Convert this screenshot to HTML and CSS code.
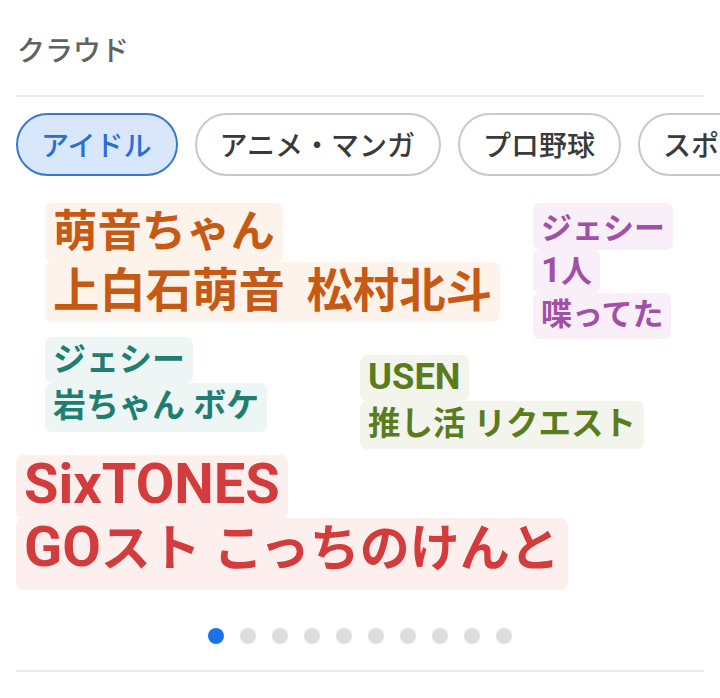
FILE: index.html
```html
<!DOCTYPE html>
<html lang="ja">
<head>
<meta charset="utf-8">
<title>クラウド</title>
<link rel="stylesheet" href="styles.css">
</head>
<body>
<main class="page">
  <header class="head">
    <h2 class="title">クラウド</h2>
  </header>
  <nav class="chips">
    <span class="chip active">アイドル</span>
    <span class="chip">アニメ・マンガ</span>
    <span class="chip">プロ野球</span>
    <span class="chip">スポーツ</span>
  </nav>
  <section class="cloud">
    <div class="word orange"><span class="ln">萌音ちゃん</span><span class="ln">上白石萌音 松村北斗</span></div>
    <div class="word purple"><span class="ln">ジェシー</span><span class="ln"><i class="lat">1</i>人</span><span class="ln">喋ってた</span></div>
    <div class="word teal"><span class="ln">ジェシー</span><span class="ln">岩ちゃん ボケ</span></div>
    <div class="word green"><span class="ln"><i class="lat">USEN</i></span><span class="ln">推し活 リクエスト</span></div>
    <div class="word red"><span class="ln"><i class="lat">SixTONES</i></span><span class="ln"><i class="lat">GO</i>スト こっちのけんと</span></div>
  </section>
  <div class="dots">
    <span class="dot on"></span><span class="dot"></span><span class="dot"></span><span class="dot"></span><span class="dot"></span>
    <span class="dot"></span><span class="dot"></span><span class="dot"></span><span class="dot"></span><span class="dot"></span>
  </div>
  <div class="rule"></div>
</main>
</body>
</html>
```
FILE: styles.css
```css
* { box-sizing: border-box; }
html, body { margin: 0; padding: 0; background: #fff; }
body {
  font-family: "Noto Sans CJK JP", "Noto Sans", sans-serif;
  color: #333;
  overflow: hidden;
}
.page { padding: 0 16px; }
.head {
  height: 97px;
  border-bottom: 2px solid #ebebeb;
  padding-top: 29px;
}
.title {
  margin: 0 0 0 1px;
  font-size: 28px;
  line-height: 40px;
  font-weight: 500;
  color: #616161;
}
.chips {
  display: flex;
  gap: 17px;
  margin: 16px -16px 0 0;
  overflow: hidden;
}
.chip {
  flex-shrink: 0;
  height: 63px;
  line-height: 59px;
  padding: 0 24px 0 23px;
  border: 2px solid #c9c9c9;
  border-radius: 32px;
  font-size: 28px;
  font-weight: 500;
  color: #3a3a3a;
  white-space: nowrap;
}
.chip.active {
  background: #d8e7fb;
  border-color: #3a78cc;
  color: #2a6fcf;
}
.cloud {
  position: relative;
  height: 444px;
}
.word {
  position: absolute;
  display: flex;
  flex-direction: column;
  align-items: flex-start;
  font-family: Roboto, "Noto Sans CJK JP", sans-serif;
  font-weight: 700;
  white-space: nowrap;
}
.ln {
  display: block;
  padding: 0 8px;
  border-radius: 7px;
}
.lat {
  font-style: normal;
  font-family: Roboto, sans-serif;
  font-size: 1.12em;
  line-height: 0;
}
.orange { left: 29px; top: 27px; font-size: 44.4px; color: #c65a14; }
.orange .ln { background: #fdf3eb; line-height: 59px; }
.orange .ln:last-child { font-size: 46.4px; word-spacing: 10px; padding-bottom: 1px; }

.purple { left: 517px; top: 27px; font-size: 31px; color: #a24fa8; }
.purple .ln { background: #f9eff9; line-height: 43px; }
.purple .ln:first-child { padding-top: 4px; }
.purple .ln:last-child { padding-bottom: 3px; }

.teal { left: 29px; top: 161px; font-size: 33px; color: #1f7e72; }
.teal .ln { background: #eef6f5; line-height: 46px; }
.teal .ln:last-child { padding-bottom: 3px; }

.green { left: 344px; top: 179px; font-size: 32.5px; color: #5a7c1e; }
.green .ln { background: #f3f5ec; line-height: 46px; }
.green .ln:last-child { padding-bottom: 2px; }

.red { left: 0; top: 279px; font-size: 50px; color: #d23c3c; }
.red .ln { background: #fdefed; line-height: 63px; }
.red .ln:last-child { padding-bottom: 9px; }

.dots {
  display: flex;
  justify-content: center;
  gap: 16px;
  padding: 8px 0 26px;
}
.dot {
  width: 16px;
  height: 16px;
  border-radius: 50%;
  background: #dddddd;
}
.dot.on { background: #1a73e8; }
.rule { border-top: 2px solid #ebebeb; }
```
